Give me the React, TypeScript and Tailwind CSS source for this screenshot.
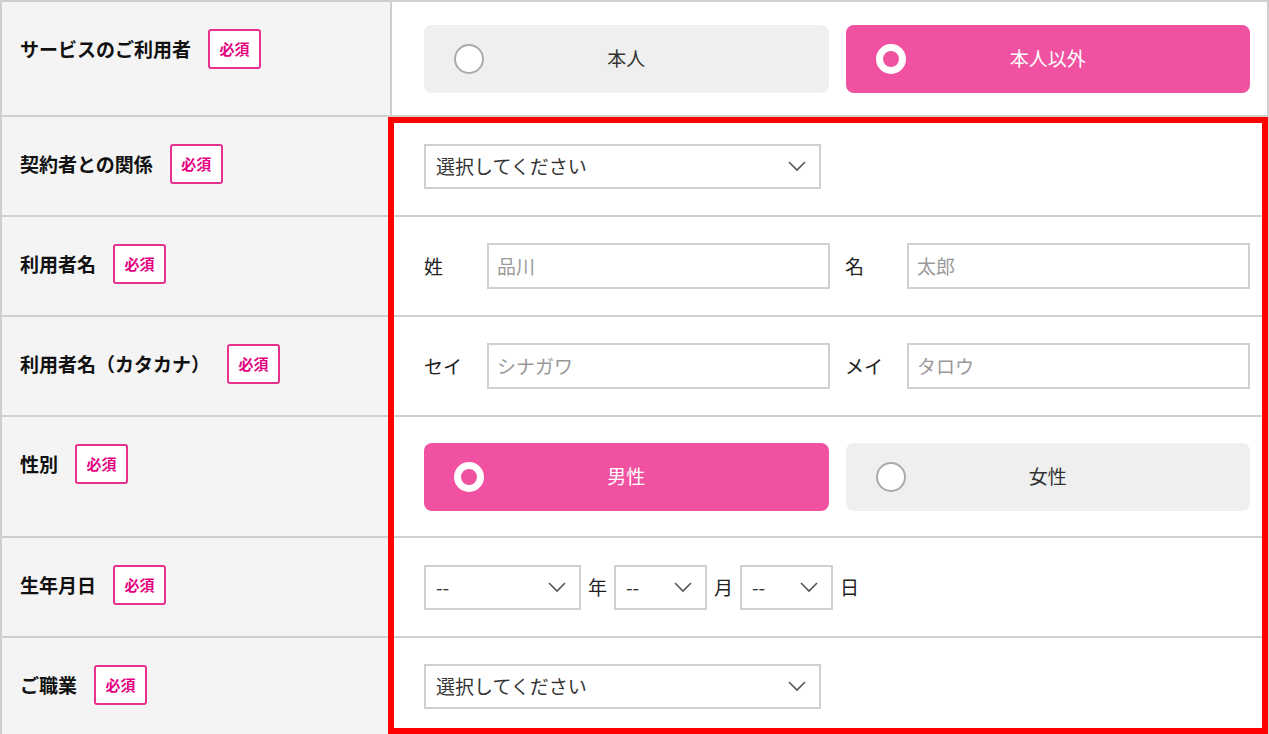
import React from "react";

const F = { fontFamily: '"Noto Sans CJK JP", "Noto Sans", sans-serif' };

function Badge() {
  return (
    <span className="ml-[17px] inline-flex h-[40px] w-[53px] items-center justify-center rounded-[3px] border-2 border-[#e8308f] bg-white text-[15px] font-bold text-[#e4007f]">
      必須
    </span>
  );
}

function Chevron() {
  return (
    <svg width="20" height="12" viewBox="0 0 20 12" className="shrink-0">
      <path d="M2 2 L10 10 L18 2" fill="none" stroke="#555" strokeWidth="1.6" />
    </svg>
  );
}

function Select({ text, w }: { text: string; w: string }) {
  return (
    <div className={`flex h-[45px] ${w} items-center justify-between border-2 border-[#d0d0d0] bg-white pl-[10px] pr-[12px] text-[19px] text-[#333]`}>
      <span>{text}</span>
      <Chevron />
    </div>
  );
}

function Radio({ label, on }: { label: string; on: boolean }) {
  return (
    <div className={`relative flex h-[68px] flex-1 items-center justify-center rounded-[8px] text-[19px] ${on ? "bg-[#f052a1] text-white" : "bg-[#efefef] text-[#333]"}`}>
      <span className={`absolute left-[30px] top-[19px] h-[30px] w-[30px] rounded-full ${on ? "border-[7px] border-white bg-[#f052a1]" : "border-2 border-[#aaa] bg-white"}`} />
      {label}
    </div>
  );
}

function Input({ ph }: { ph: string }) {
  return (
    <div className="flex h-[46px] flex-1 items-center border-2 border-[#d0d0d0] bg-white px-[8px] text-[19px] text-[#999]">{ph}</div>
  );
}

function Row({ label, h, children, last }: { label: string; h: string; children: React.ReactNode; last?: boolean }) {
  return (
    <div className={`flex ${h} ${last ? "" : "border-b-2 border-[#cfcfcf]"}`}>
      <div className="flex w-[390px] shrink-0 items-start border-r-2 border-[#cfcfcf] bg-[#f4f4f4] pl-[18px] pt-[27px]">
        <div className="flex items-center">
          <span className="text-[19px] font-bold text-[#111]">{label}</span>
          <Badge />
        </div>
      </div>
      <div className="flex flex-1 items-center bg-white pl-[32px] pr-[17px]">{children}</div>
    </div>
  );
}

export default function App() {
  return (
    <div style={F} className="relative h-[734px] w-[1269px] overflow-hidden bg-white">
      <div className="border-2 border-b-0 border-[#cfcfcf] h-[734px] flex flex-col">
        <Row label="サービスのご利用者" h="h-[115px]">
          <div className="flex flex-1 gap-[17px]">
            <Radio label="本人" on={false} />
            <Radio label="本人以外" on={true} />
          </div>
        </Row>
        <Row label="契約者との関係" h="h-[100px]">
          <Select text="選択してください" w="w-[397px]" />
        </Row>
        <Row label="利用者名" h="h-[100px]">
          <div className="flex flex-1 items-center text-[19px] text-[#222]">
            <span className="w-[63px]">姓</span>
            <Input ph="品川" />
            <span className="w-[77px] pl-[15px]">名</span>
            <Input ph="太郎" />
          </div>
        </Row>
        <Row label="利用者名（カタカナ）" h="h-[100px]">
          <div className="flex flex-1 items-center text-[19px] text-[#222]">
            <span className="w-[63px]">セイ</span>
            <Input ph="シナガワ" />
            <span className="w-[77px] pl-[15px]">メイ</span>
            <Input ph="タロウ" />
          </div>
        </Row>
        <Row label="性別" h="h-[121px]">
          <div className="flex flex-1 gap-[17px]">
            <Radio label="男性" on={true} />
            <Radio label="女性" on={false} />
          </div>
        </Row>
        <Row label="生年月日" h="h-[100px]">
          <div className="flex items-center gap-[7px] text-[19px] text-[#222]">
            <Select text="--" w="w-[157px]" />
            <span>年</span>
            <Select text="--" w="w-[93px]" />
            <span>月</span>
            <Select text="--" w="w-[93px]" />
            <span>日</span>
          </div>
        </Row>
        <Row label="ご職業" h="flex-1" last>
          <Select text="選択してください" w="w-[397px]" />
        </Row>
      </div>
      <div className="pointer-events-none absolute left-[388px] top-[117px] h-[617px] w-[880px] border-[6px] border-[#ff0000]" />
    </div>
  );
}
